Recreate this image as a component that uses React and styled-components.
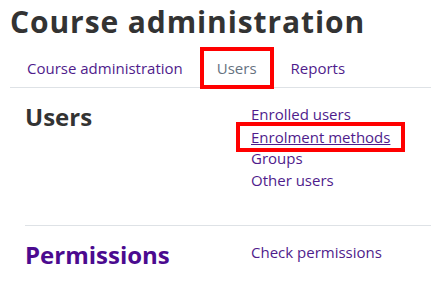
import React from "react";
import styled, { createGlobalStyle } from "styled-components";

const GlobalStyle = createGlobalStyle`
  body {
    margin: 0;
    background: #fff;
    font-family: "Open Sans", "Liberation Sans", sans-serif;
    color: #333;
  }
`;

const Page = styled.div`
  width: 431px;
  height: 283px;
  overflow: hidden;
  padding-left: 10px;
  box-sizing: border-box;
`;

const Title = styled.h1`
  margin: 0;
  padding-top: 4px;
  font-size: 30px;
  font-weight: 700;
  line-height: 36px;
  letter-spacing: 0.9px;
  color: #333;
  white-space: nowrap;
`;

const Tabs = styled.nav`
  display: flex;
  margin-top: 7px;
  border-bottom: 1px solid #dee2e6;
`;

const Tab = styled.a`
  padding: 10px 17px 8px;
  font-size: 15px;
  line-height: 22px;
  color: ${(p) => (p.$active ? "#66727f" : "#4f1c8c")};
  outline: ${(p) => (p.$marked ? "4px solid #ff0000" : "none")};
  outline-offset: -4px;
  margin-bottom: ${(p) => (p.$marked ? "-2px" : "0")};
  padding-bottom: ${(p) => (p.$marked ? "10px" : "8px")};
  text-decoration: none;
  white-space: nowrap;
`;

const Section = styled.section`
  display: grid;
  grid-template-columns: 226px 1fr;
  align-items: start;
  margin-left: 15px;
  padding: 14px 0 ${(p) => p.$bottom}px;
  border-top: ${(p) => (p.$divided ? "1px solid #dee2e6" : "none")};
`;

const Heading = styled.h2`
  margin: 0;
  font-size: 24px;
  font-weight: 700;
  line-height: 30px;
  color: ${(p) => p.$color};
`;

const Links = styled.ul`
  list-style: none;
  margin: 2px 0 0;
  padding: 0;
`;

const LinkItem = styled.li`
  display: flex;
`;

const Link = styled.a`
  font-size: 15px;
  line-height: 21.6px;
  color: #4f1c8c;
  text-decoration: ${(p) => (p.$hover ? "underline" : "none")};
  white-space: nowrap;
`;

const MarkBox = styled.span`
  display: inline-block;
  padding: 0 11px;
  margin: -4px -15px;
  border: 4px solid #ff0000;
`;

const sections = [
  {
    title: "Users",
    color: "#333",
    bottom: 34,
    links: ["Enrolled users", "Enrolment methods", "Groups", "Other users"],
    marked: "Enrolment methods",
  },
  {
    title: "Permissions",
    color: "#4b0a8f",
    bottom: 0,
    links: ["Check permissions"],
    divided: true,
  },
];

export default function App() {
  return (
    <Page>
      <GlobalStyle />
      <Title>Course administration</Title>
      <Tabs>
        <Tab href="#course">Course administration</Tab>
        <Tab href="#users" $active $marked>
          Users
        </Tab>
        <Tab href="#reports">Reports</Tab>
      </Tabs>
      {sections.map((s) => (
        <Section key={s.title} $bottom={s.bottom} $divided={s.divided}>
          <Heading $color={s.color}>{s.title}</Heading>
          <Links>
            {s.links.map((l) => (
              <LinkItem key={l}>
                {l === s.marked ? (
                  <MarkBox>
                    <Link href="#" $hover>
                      {l}
                    </Link>
                  </MarkBox>
                ) : (
                  <Link href="#">{l}</Link>
                )}
              </LinkItem>
            ))}
          </Links>
        </Section>
      ))}
    </Page>
  );
}
